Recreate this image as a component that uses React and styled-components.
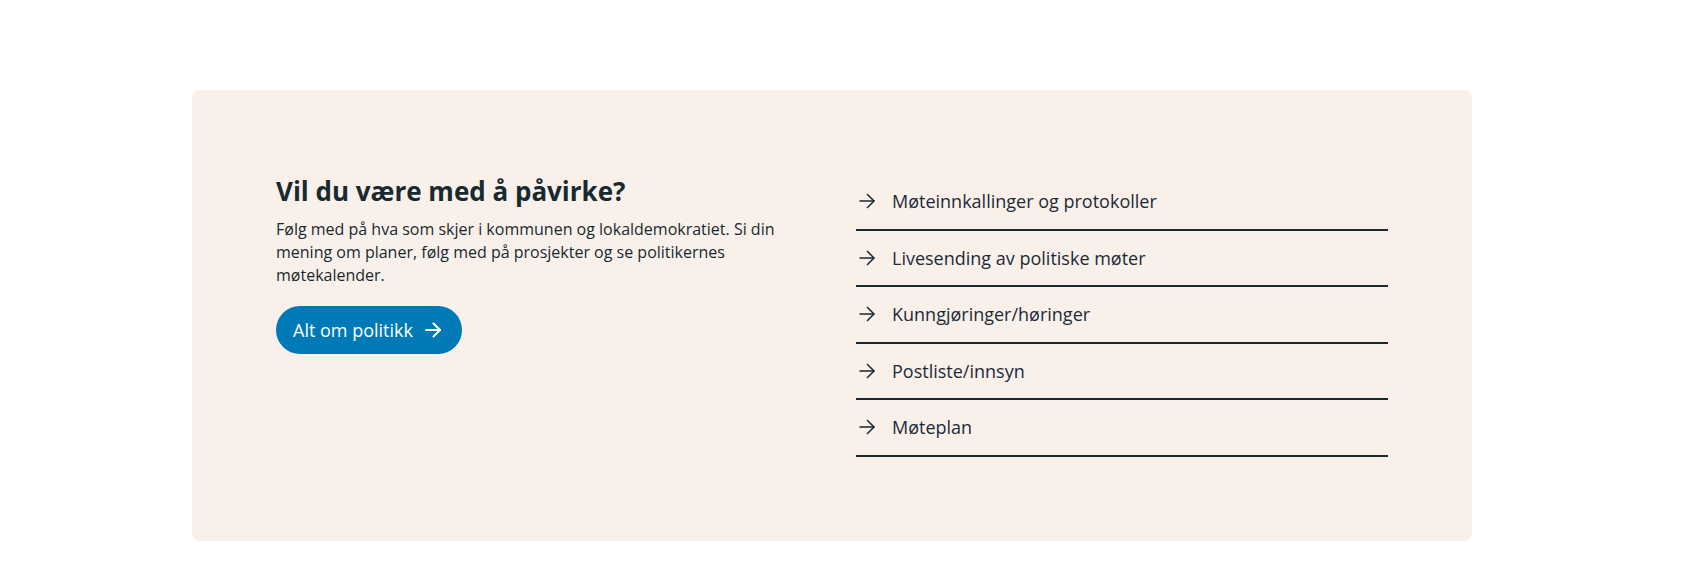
import styled, { createGlobalStyle } from 'styled-components'

const GlobalStyle = createGlobalStyle`
    body {
        margin: 0;
        background: #ffffff;
        font-family: 'Open Sans', 'Noto Sans', sans-serif;
        color: #172a30;
    }
`

const links = [
    "Møteinnkallinger og protokoller",
    "Livesending av politiske møter",
    "Kunngjøringer/høringer",
    "Postliste/innsyn",
    "Møteplan",
]

function Arrow({ stroke = 1.6 }) {
    return (
        <svg width="16" height="16" viewBox="0 0 16 16" fill="none"
             stroke="currentColor" strokeWidth={stroke} strokeLinecap="round" strokeLinejoin="round">
            <path d="M1 8h14" />
            <path d="M8.5 1.5L15 8l-6.5 6.5" />
        </svg>
    )
}

function App() {
    return (
        <>
            <GlobalStyle />
            <Page>
                <Card>
                    <Intro>
                        <Title>Vil du være med å påvirke?</Title>
                        <Text>
                            Følg med på hva som skjer i kommunen og lokaldemokratiet. Si din
                            mening om planer, følg med på prosjekter og se politikernes
                            møtekalender.
                        </Text>
                        <Button href="#">
                            Alt om politikk
                            <Arrow stroke={2} />
                        </Button>
                    </Intro>
                    <LinkList>
                        {links.map((link) => (
                            <LinkItem key={link}>
                                <Arrow stroke={1.5} />
                                <span>{link}</span>
                            </LinkItem>
                        ))}
                    </LinkList>
                </Card>
            </Page>
        </>
    )
}

const Page = styled.div`
    padding: 90px 0 27px 192px;
`

const Card = styled.section`
    width: 1280px;
    box-sizing: border-box;
    background: #f9f0ea;
    border-radius: 8px;
    padding: 84px 0 84px 84px;
    display: grid;
    grid-template-columns: 514px 532px;
    column-gap: 66px;
    align-items: start;
`

const Intro = styled.div`
    display: flex;
    flex-direction: column;
    align-items: flex-start;
`

const Title = styled.h2`
    margin: -1px 0 9px;
    font-size: 26px;
    line-height: 36px;
    font-weight: 700;
    color: #172a30;
`

const Text = styled.p`
    margin: 0 0 19px;
    font-size: 16px;
    line-height: 23px;
    color: #172a30;
`

const Button = styled.a`
    display: inline-flex;
    align-items: center;
    gap: 12px;
    height: 48px;
    padding: 0 21px 0 17px;
    box-sizing: border-box;
    border-radius: 24px;
    background: #0079b7;
    color: #ffffff;
    font-size: 18px;
    text-decoration: none;
`

const LinkList = styled.ul`
    list-style: none;
    margin: 0;
    padding: 0;
`

const LinkItem = styled.li`
    display: flex;
    align-items: center;
    gap: 17px;
    height: 56.5px;
    box-sizing: border-box;
    padding: 0 0 0 3px;
    border-bottom: 2px solid #172a30;
    font-size: 18px;
    color: #1c2b38;
    cursor: pointer;

    svg {
        flex: none;
        color: #172a30;
    }
`

export default App
